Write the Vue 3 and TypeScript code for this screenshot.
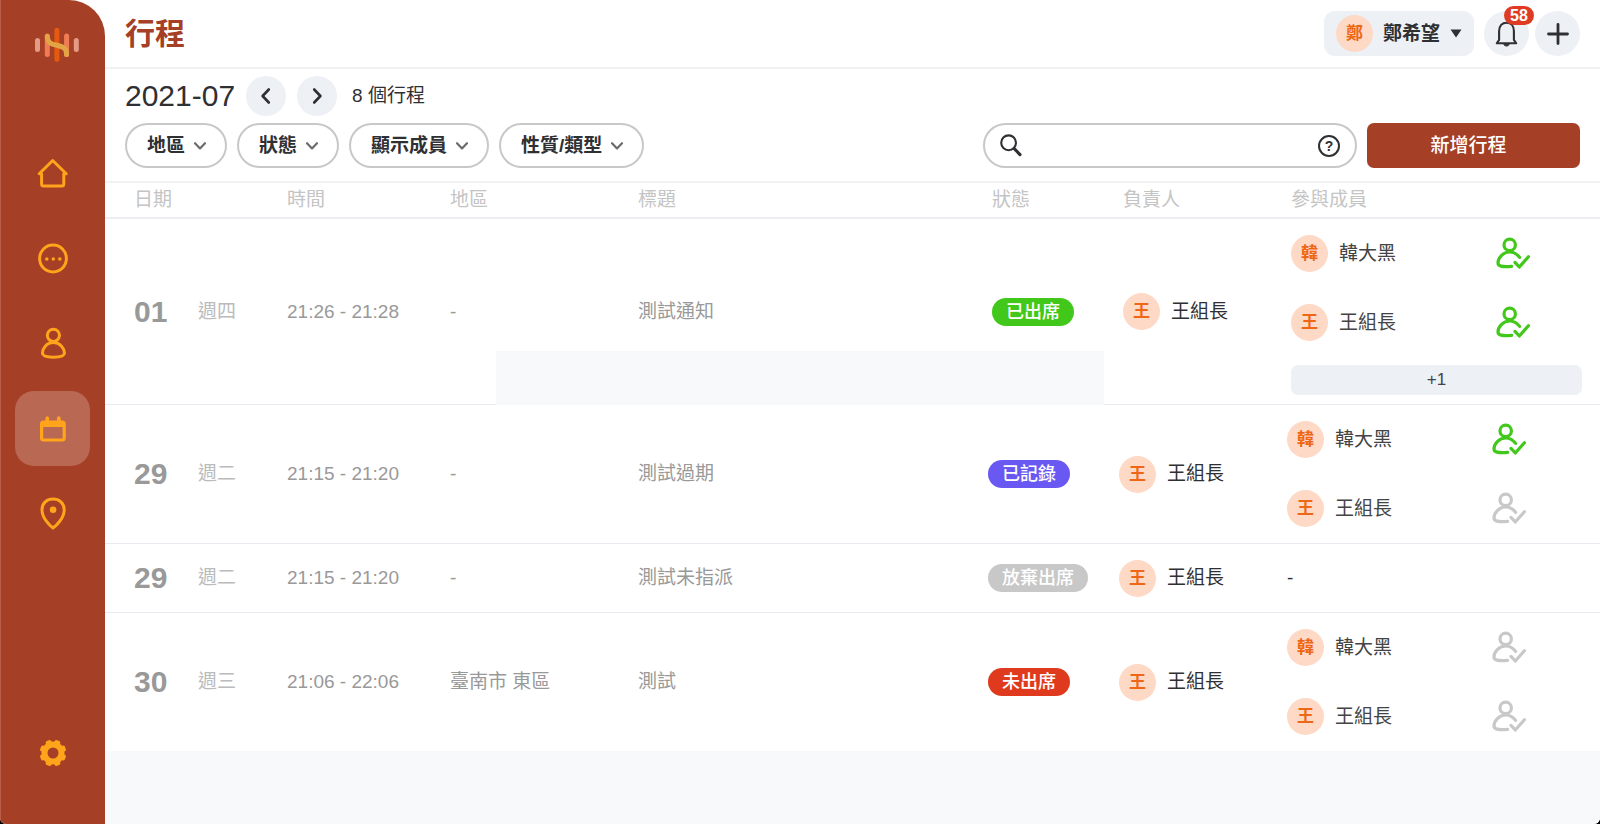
<script setup lang="ts">
import { ref } from 'vue'

interface Member {
  name: string
  present: boolean
}

interface Trip {
  id: number
  day: string
  weekday: string
  time: string
  region: string
  title: string
  status: string
  tone: 'green' | 'purple' | 'grey' | 'red'
  owner: string
  members: Member[]
  more?: number
}

const keyword = ref('')
const columns = ['日期', '時間', '地區', '標題', '狀態', '負責人', '參與成員']
const filters = ['地區', '狀態', '顯示成員', '性質/類型']

const trips: Trip[] = [
  {
    id: 1, day: '01', weekday: '週四', time: '21:26 - 21:28', region: '-', title: '測試通知',
    status: '已出席', tone: 'green', owner: '王組長', more: 1,
    members: [{ name: '韓大黑', present: true }, { name: '王組長', present: true }],
  },
  {
    id: 2, day: '29', weekday: '週二', time: '21:15 - 21:20', region: '-', title: '測試過期',
    status: '已記錄', tone: 'purple', owner: '王組長',
    members: [{ name: '韓大黑', present: true }, { name: '王組長', present: false }],
  },
  {
    id: 3, day: '29', weekday: '週二', time: '21:15 - 21:20', region: '-', title: '測試未指派',
    status: '放棄出席', tone: 'grey', owner: '王組長', members: [],
  },
  {
    id: 4, day: '30', weekday: '週三', time: '21:06 - 22:06', region: '臺南市 東區', title: '測試',
    status: '未出席', tone: 'red', owner: '王組長',
    members: [{ name: '韓大黑', present: false }, { name: '王組長', present: false }],
  },
]
</script>

<template>
  <div class="app">
    <aside class="sidebar">
      <svg class="logo" width="46" height="36" viewBox="0 0 46 36" fill="none" stroke-width="5" stroke-linecap="round" aria-hidden="true">
        <path d="M3.5 13.5V22.5M42.3 13.5V22.5" stroke="#e39b86" />
        <path d="M13.3 9V27.5M32.6 9V27.5" stroke="#f07c55" />
        <path d="M22.9 3.3V32.3" stroke="#e65a10" />
        <path d="M13.3 9.5C13.3 15.5 17 17 22.9 18.3C29.5 19.8 32.6 21.5 32.6 27.5" stroke="#e3a544" />
      </svg>
      <nav class="nav">
        <a href="#home" aria-label="首頁">
          <svg width="33" height="32" viewBox="0 0 33 32" fill="none" stroke="currentColor" stroke-width="3" stroke-linejoin="round">
            <path d="M16.7 2.5L3.2 15.8H5.6V26Q5.6 28 7.6 28H25.8Q27.8 28 27.8 26V15.8H30.2Z" />
          </svg>
        </a>
        <a href="#messages" aria-label="訊息">
          <svg width="32" height="32" viewBox="0 0 32 32">
            <circle cx="16" cy="15.5" r="13.4" fill="none" stroke="currentColor" stroke-width="3" />
            <g fill="currentColor"><circle cx="9.8" cy="16" r="1.8" /><circle cx="16.3" cy="16" r="1.8" /><circle cx="22.8" cy="16" r="1.8" /></g>
          </svg>
        </a>
        <a href="#contacts" aria-label="人員">
          <svg width="32" height="33" viewBox="0 0 32 33" fill="none" stroke="currentColor" stroke-width="3">
            <circle cx="16.4" cy="8.3" r="6.1" />
            <path d="M16.4 15.6C9.5 15.6 5.4 21.6 5.4 26C5.4 29.3 10.5 30.2 16.4 30.2C22.3 30.2 27.5 29.3 27.5 26C27.5 21.6 23.3 15.6 16.4 15.6Z" />
          </svg>
        </a>
        <a href="#trips" class="active" aria-current="page" aria-label="行程">
          <svg width="32" height="32" viewBox="0 0 32 32" fill="none" stroke="currentColor">
            <rect x="4.6" y="9" width="22.6" height="18" rx="2" stroke-width="3.2" />
            <path d="M4.6 11H27.2" stroke-width="6" />
            <path d="M10.3 5V10M21.8 5V10" stroke-width="3.6" stroke-linecap="round" />
          </svg>
        </a>
        <a href="#places" aria-label="地點">
          <svg width="32" height="34" viewBox="0 0 32 34">
            <path d="M16 31C13 29 5 21 5 12.9C5 6 10 2.1 16 2.1S27.2 6 27.2 12.9C27.2 21 19 29 16 31Z" fill="none" stroke="currentColor" stroke-width="3" stroke-linejoin="round" />
            <circle cx="16.1" cy="12.7" r="3.3" fill="currentColor" />
          </svg>
        </a>
      </nav>
      <a href="#settings" class="settings" aria-label="設定">
        <svg width="28" height="28" viewBox="-14 -14 28 28">
          <circle r="8.5" fill="none" stroke="currentColor" stroke-width="6" />
          <rect v-for="n in 8" :key="n" x="-3" y="-13.4" width="6" height="5" rx="1.8" fill="currentColor" :transform="`rotate(${n * 45 - 22.5})`" />
        </svg>
      </a>
    </aside>

    <main class="main">
      <header class="topbar">
        <h1>行程</h1>
        <button type="button" class="user">
          <span class="avatar">鄭</span>
          <span class="user-name">鄭希望</span>
          <svg width="12" height="9" viewBox="0 0 12 9" aria-hidden="true"><path d="M0.5 0.5H11.5L6 8.5Z" fill="#2f3033" /></svg>
        </button>
        <div class="round-group">
          <button type="button" class="round" aria-label="通知 58">
            <svg width="23" height="27" viewBox="0 0 23 27" fill="none" stroke="#2f3033" stroke-width="2.1" stroke-linejoin="round">
              <path d="M1.8 23.3H21.2L18.9 19.9V11C18.9 5.7 15.8 2.7 11.5 2.7S4.1 5.7 4.1 11V19.9Z" />
              <path d="M8.8 24.3A2.8 2.4 0 0 0 14.2 24.3Z" fill="#2f3033" stroke-width="1" />
            </svg>
            <span class="count">58</span>
          </button>
          <button type="button" class="round" aria-label="新增">
            <svg width="22" height="22" viewBox="0 0 22 22" stroke="#2f3033" stroke-width="2.8" stroke-linecap="round"><path d="M11 1.5V20.5M1.5 11H20.5" /></svg>
          </button>
        </div>
      </header>

      <section class="toolbar">
        <div class="period">
          <h2>2021-07</h2>
          <button type="button" class="step" aria-label="上個月">
            <svg width="18" height="18" viewBox="0 0 18 18" fill="none" stroke="#2f3033" stroke-width="2.6" stroke-linecap="round" stroke-linejoin="round"><path d="M11.8 2.5L5.6 9L11.8 15.5" /></svg>
          </button>
          <button type="button" class="step" aria-label="下個月">
            <svg width="18" height="18" viewBox="0 0 18 18" fill="none" stroke="#2f3033" stroke-width="2.6" stroke-linecap="round" stroke-linejoin="round"><path d="M6.2 2.5L12.4 9L6.2 15.5" /></svg>
          </button>
          <span class="total">8 個行程</span>
        </div>
        <div class="controls">
          <button v-for="f in filters" :key="f" type="button" class="filter" aria-haspopup="listbox">
            {{ f }}
            <svg width="14" height="10" viewBox="0 0 14 10" fill="none" stroke="#6b6b6b" stroke-width="2.2" stroke-linecap="round" stroke-linejoin="round"><path d="M2 2.2L7 7.4L12 2.2" /></svg>
          </button>
          <div class="search">
            <svg width="22" height="23" viewBox="0 0 22 23" fill="none" stroke="#2f3033" aria-hidden="true">
              <circle cx="8.6" cy="8.8" r="7.4" stroke-width="2.1" />
              <path d="M14.6 15L20 20.6" stroke-width="3.2" stroke-linecap="round" />
            </svg>
            <input v-model="keyword" type="text" aria-label="搜尋行程" />
            <button type="button" class="help" aria-label="說明">?</button>
          </div>
          <button type="button" class="create">新增行程</button>
        </div>
      </section>

      <table class="trips">
        <colgroup>
          <col class="c-date" /><col class="c-time" /><col class="c-region" /><col />
          <col class="c-status" /><col class="c-owner" /><col class="c-members" />
        </colgroup>
        <thead>
          <tr><th v-for="c in columns" :key="c" scope="col">{{ c }}</th></tr>
        </thead>
        <tbody>
          <tr v-for="t in trips" :key="t.id" :class="{ expandable: t.more }">
            <td><div class="date"><strong>{{ t.day }}</strong><span>{{ t.weekday }}</span></div></td>
            <td>{{ t.time }}</td>
            <td>{{ t.region }}</td>
            <td>{{ t.title }}<div v-if="t.more" class="cover"></div></td>
            <td><span class="badge" :class="t.tone">{{ t.status }}</span></td>
            <td>
              <div class="person owner"><span class="avatar">{{ t.owner[0] }}</span><span class="name">{{ t.owner }}</span></div>
            </td>
            <td class="members">
              <div v-for="m in t.members" :key="m.name" class="person member">
                <span class="avatar">{{ m.name[0] }}</span>
                <span class="name">{{ m.name }}</span>
                <svg class="check" :class="{ on: m.present }" width="35" height="33" viewBox="0 0 35 33" fill="none" stroke="currentColor" stroke-width="3.2" stroke-linecap="round" stroke-linejoin="round" role="img" :aria-label="m.present ? '已出席' : '未出席'">
                  <circle cx="13.7" cy="7.9" r="5.7" />
                  <path d="M23.6 20.4C21 16.8 18 15 13.7 15C7 15 2 21 2 26C2 28 3 28.6 5 29.1C8 29.8 11 29.8 15.6 29.3" />
                  <path d="M19 25.4L23.3 30L32.4 19.8" />
                </svg>
              </div>
              <div v-if="!t.members.length" class="none">-</div>
              <button v-if="t.more" type="button" class="more">+{{ t.more }}</button>
            </td>
          </tr>
        </tbody>
      </table>
    </main>
  </div>
</template>

<style>
html {
  background: #000;
}
body {
  margin: 0;
}
</style>

<style scoped>
.app {
  display: flex;
  min-height: 100vh;
  overflow: hidden;
  border-radius: 0 0 6px 6px;
  background: #fff;
  color: #2f3033;
  font-family: "Liberation Sans", "Noto Sans CJK TC", sans-serif;
  font-size: 19px;
  line-height: 24px;
}
button {
  border: 0;
  padding: 0;
  font: inherit;
  color: inherit;
  background: none;
  cursor: pointer;
}
svg {
  display: block;
  flex: none;
}
.sidebar {
  box-sizing: border-box;
  flex: none;
  display: flex;
  flex-direction: column;
  align-items: center;
  width: 105px;
  padding: 27px 0 57px;
  border-top-right-radius: 36px;
  background: #a53f26;
  box-shadow: inset 1px 0 #b75f48;
  color: #ffa41b;
}
.logo {
  margin-left: 9px;
}
.nav {
  display: flex;
  flex-direction: column;
  gap: 10px;
  margin-top: 73px;
}
.nav a {
  display: grid;
  place-items: center;
  width: 75px;
  height: 75px;
  border-radius: 19px;
  color: inherit;
}
.nav .active {
  background: #b96853;
}
.settings {
  margin-top: auto;
  color: inherit;
}
.main {
  flex: 1;
  min-width: 0;
  background: #f7f9fb;
}
.topbar {
  display: flex;
  align-items: center;
  height: 67px;
  padding: 0 20px;
  border-bottom: 2px solid #f2f2f4;
  background: #fff;
}
h1 {
  margin: 0 auto 0 0;
  font-size: 30px;
  line-height: 40px;
  color: #a53f26;
}
.avatar {
  flex: none;
  width: 37px;
  height: 37px;
  border-radius: 50%;
  background: #fdd9c6;
  color: #ee6715;
  font-size: 17px;
  font-weight: 700;
  line-height: 37px;
  text-align: center;
}
.user {
  display: flex;
  align-items: center;
  height: 45px;
  padding: 0 12px;
  border-radius: 11px;
  background: #edf0f5;
  font-weight: 700;
}
.user-name {
  margin: 0 10px;
}
.round-group {
  display: flex;
  gap: 6px;
  margin-left: 10px;
}
.round {
  position: relative;
  display: grid;
  place-items: center;
  width: 45px;
  height: 45px;
  border-radius: 50%;
  background: #edf0f5;
}
.count {
  position: absolute;
  top: -5px;
  right: -5px;
  width: 30px;
  border-radius: 10px;
  background: #df3a22;
  color: #fff;
  font-size: 16px;
  font-weight: 700;
  line-height: 19px;
}
.toolbar {
  padding: 7px 20px 13px;
  border-bottom: 2px solid #f2f2f4;
  background: #fff;
}
.period {
  display: flex;
  align-items: center;
  gap: 11px;
}
h2 {
  margin: 0;
  font-size: 30px;
  font-weight: 400;
  line-height: 40px;
}
.step {
  display: grid;
  place-items: center;
  width: 40px;
  height: 40px;
  border-radius: 50%;
  background: #edf0f5;
}
.total {
  margin-left: 4px;
}
.controls {
  display: flex;
  gap: 10px;
  margin-top: 7px;
}
.filter {
  box-sizing: border-box;
  display: flex;
  align-items: center;
  gap: 8px;
  height: 45px;
  padding: 0 18px 0 20px;
  border: 2px solid #c8c8c8;
  border-radius: 23px;
  font-weight: 700;
}
.search {
  box-sizing: border-box;
  display: flex;
  align-items: center;
  gap: 10px;
  width: 374px;
  height: 45px;
  margin-left: auto;
  padding: 0 15px;
  border: 2px solid #c8c8c8;
  border-radius: 23px;
}
.search input {
  flex: 1;
  min-width: 0;
  border: 0;
  outline: 0;
  padding: 0;
  background: none;
  font: inherit;
  color: inherit;
}
.help {
  box-sizing: border-box;
  width: 22px;
  height: 22px;
  border: 2px solid #2f3033;
  border-radius: 50%;
  font-size: 14px;
  font-weight: 700;
  line-height: 18px;
}
.create {
  width: 213px;
  height: 45px;
  padding-right: 10px;
  border-radius: 7px;
  background: #a53f26;
  color: #fff;
  font-weight: 500;
}
.trips {
  width: 100%;
  table-layout: fixed;
  border-collapse: separate;
  border-spacing: 0;
  background: #fff;
}
.c-date { width: 182px; }
.c-time { width: 163px; }
.c-region { width: 188px; }
.c-status { width: 131px; }
.c-owner { width: 168px; }
.c-members { width: 313px; }
th {
  height: 34px;
  padding: 0;
  border-bottom: 2px solid #ededf3;
  color: #c4c4c4;
  font-weight: 400;
  text-align: left;
}
th:first-child,
td:first-child {
  padding-left: 29px;
}
th:nth-child(n + 5),
.expandable td:nth-child(n + 5) {
  padding-left: 4px;
}
td {
  padding: 0;
  border-bottom: 1px solid #e9eaf0;
  color: #999;
}
tr:last-child td {
  border-bottom: 0;
}
.expandable {
  position: relative;
}
.cover {
  position: absolute;
  left: 391px;
  right: 496px;
  bottom: 0;
  height: 54px;
  background: #f7f9fb;
}
.date {
  display: flex;
  align-items: center;
}
.date strong {
  width: 64px;
  font-size: 30px;
}
.date span {
  color: #bbb;
}
.badge {
  display: inline-block;
  padding: 0 14px;
  border-radius: 14px;
  color: #fff;
  font-size: 18px;
  font-weight: 500;
  line-height: 28px;
  vertical-align: middle;
}
.green { background: #41c81b; }
.purple { background: #6958f1; }
.grey { background: #c8c8c8; }
.red { background: #df3a1e; }
.person {
  display: flex;
  align-items: center;
  gap: 11px;
  color: #2f3033;
}
.member {
  height: 69px;
  color: #444;
}
.member .name {
  width: 146px;
}
.check {
  color: #c8c8c8;
}
.check.on {
  color: #41c81b;
}
.none {
  line-height: 68px;
  color: #2f3033;
}
.more {
  display: block;
  width: calc(100% - 18px);
  height: 30px;
  margin: 8px 0 9px;
  border-radius: 7px;
  background: #edf0f5;
  color: #444;
  font-size: 17px;
}
</style>
